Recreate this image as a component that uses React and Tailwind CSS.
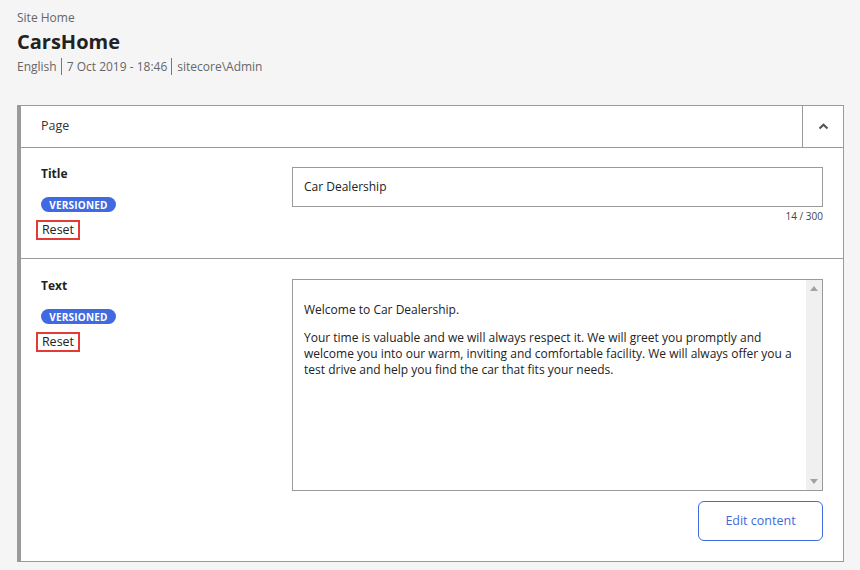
import React from 'react';

const Badge = () => (
  <span className="inline-flex h-[15px] w-[75px] items-center justify-center rounded-full bg-[#3f6ae0] text-[10px] font-bold leading-none tracking-[0.2px] text-white">
    VERSIONED
  </span>
);

const FieldMeta = ({ label }) => (
  <div className="flex flex-col items-start">
    <div className="mt-[1px] text-[12px] font-bold leading-[12px] text-[#1f1f1f]">{label}</div>
    <div className="mt-[17px] flex">
      <Badge />
    </div>
    <div className="-ml-[5px] mt-[8px] flex h-[20px] w-[44px] items-center justify-center border-2 border-[#e53935] text-[12.5px] leading-none text-[#222]">
      Reset
    </div>
  </div>
);

const ScrollBar = () => (
  <div className="flex w-[16px] flex-col items-center justify-between bg-[#f0f0f0] py-[6px]">
    <svg width="8" height="5" viewBox="0 0 8 5">
      <path d="M4 0 L8 5 L0 5 Z" fill="#a3a3a3" />
    </svg>
    <svg width="8" height="5" viewBox="0 0 8 5">
      <path d="M0 0 L8 0 L4 5 Z" fill="#a3a3a3" />
    </svg>
  </div>
);

export default function App() {
  return (
    <div className="min-h-screen bg-[#f5f5f5] font-['Open_Sans',sans-serif] text-[#222]">
      <div className="pl-[17px] pr-[16px] pt-[9px]">
        {/* Header */}
        <div className="text-[12px] leading-[17px] text-[#666]">Site Home</div>
        <div className="mt-[3px] text-[20px] font-bold leading-[26px] text-[#222]">CarsHome</div>
        <div className="mt-[3px] flex items-center text-[12px] leading-[17px] text-[#666]">
          <span className="pr-[4px]">English</span>
          <span className="border-l border-[#777] pl-[5px] pr-[4px]">7 Oct 2019 - 18:46</span>
          <span className="border-l border-[#777] pl-[5px]">sitecore\Admin</span>
        </div>

        {/* Panel */}
        <div className="mt-[30px] border border-l-4 border-[#9a9a9a] bg-white">
          <div className="flex h-[42px] items-stretch border-b border-[#9a9a9a]">
            <div className="flex flex-1 items-center pl-[20px] text-[12.5px] text-[#333]">Page</div>
            <div className="flex w-[41px] items-center justify-center border-l border-[#9a9a9a]">
              <svg width="11" height="7" viewBox="0 0 11 7">
                <path d="M1.5 5.5 L5.5 1.8 L9.5 5.5" fill="none" stroke="#555" strokeWidth="2.2" />
              </svg>
            </div>
          </div>

          {/* Title section */}
          <div className="grid grid-cols-[251px_1fr] border-b border-[#9a9a9a] pb-[18px] pl-[20px] pr-[20px] pt-[19px]">
            <FieldMeta label="Title" />
            <div>
              <div className="flex h-[40px] items-center border border-[#9a9a9a] px-[11px] text-[12px] text-[#222]">
                Car Dealership
              </div>
              <div className="mt-[2px] text-right text-[10px] leading-[14px] text-[#444]">14 / 300</div>
            </div>
          </div>

          {/* Text section */}
          <div className="grid grid-cols-[251px_1fr] pb-[20px] pl-[20px] pr-[20px] pt-[20px]">
            <FieldMeta label="Text" />
            <div>
              <div className="flex h-[212px] border border-[#9a9a9a]">
                <div className="flex-1 px-[11px] pt-[22px] text-[12px] leading-[16px] text-[#222]">
                  <p>Welcome to Car Dealership.</p>
                  <p className="mt-[12px]">
                    Your time is valuable and we will always respect it. We will greet you promptly and
                    welcome you into our warm, inviting and comfortable facility. We will always offer you a
                    test drive and help you find the car that fits your needs.
                  </p>
                </div>
                <ScrollBar />
              </div>
              <div className="mt-[10px] flex justify-end">
                <button className="h-[40px] w-[125px] rounded-[6px] border border-[#3f6ae0] bg-white text-[12.5px] text-[#3f6ae0]">
                  Edit content
                </button>
              </div>
            </div>
          </div>
        </div>
      </div>
    </div>
  );
}
